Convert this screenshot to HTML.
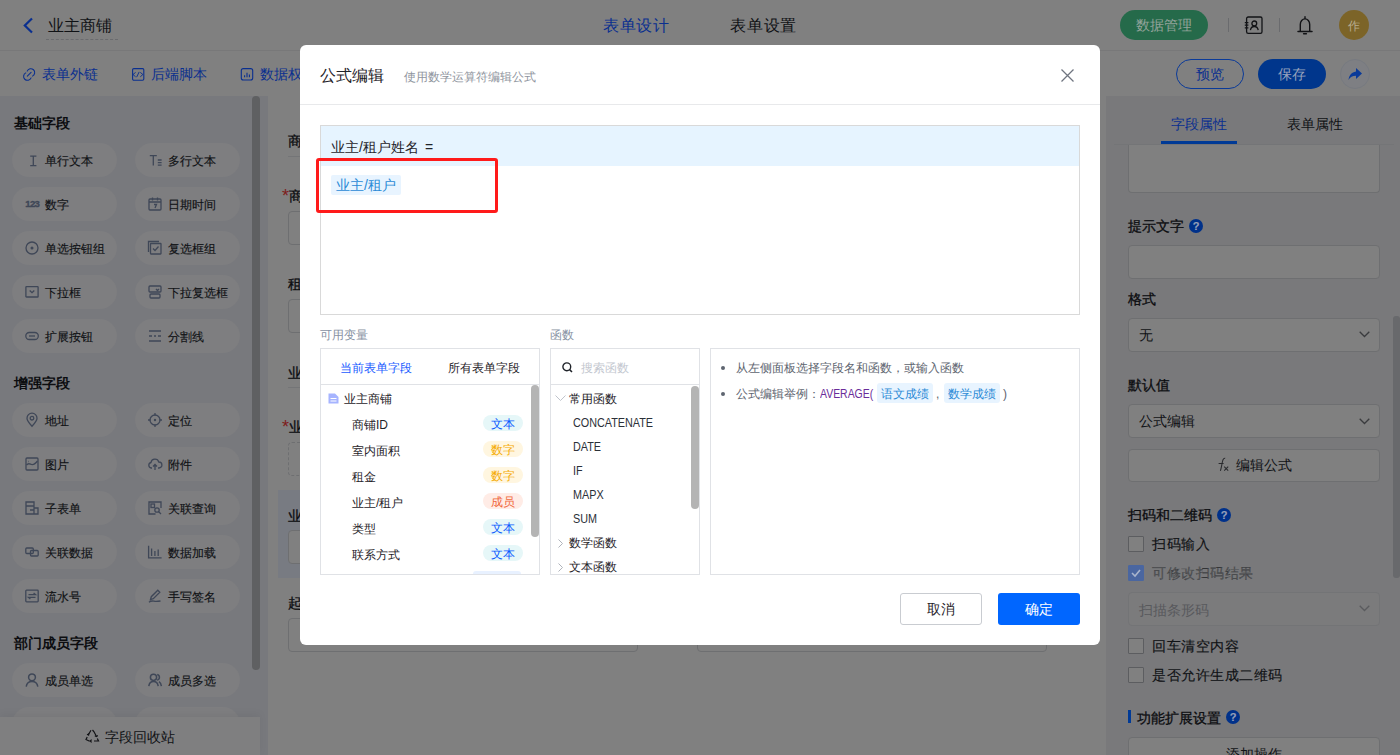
<!DOCTYPE html><html><head><meta charset="utf-8"><style>
*{box-sizing:border-box;margin:0;padding:0}
html,body{width:1400px;height:755px;overflow:hidden;font-family:"Liberation Sans",sans-serif;color:#101215;background:#808080}
.a{position:absolute}
.t{position:absolute;white-space:nowrap;line-height:1}
svg{position:absolute;overflow:visible}
.pill{position:absolute;width:105px;height:34px;border-radius:17px;background:#7e7e80}
.sec{position:absolute;left:14px;font-size:14px;font-weight:bold;line-height:1;color:#0c0d10;white-space:nowrap}
.ptx{position:absolute;font-size:12px;line-height:1;color:#101215;white-space:nowrap}
.inp{position:absolute;border:1px solid #6e6f71;border-radius:4px;background:#808080}
.lbl{position:absolute;font-size:14px;line-height:1;font-weight:500;-webkit-text-stroke:0.3px #0c0d10;color:#0c0d10;white-space:nowrap}
.q{position:absolute;width:14px;height:14px;border-radius:7px;background:#00318a;color:#98a0b8;font-size:11px;font-weight:bold;line-height:14px;text-align:center;-webkit-text-stroke:0.15px #98a0b8}
.cb{position:absolute;left:1128px;width:16px;height:16px;border:1px solid #5c5d60;border-radius:1px;background:#808080}
.cbt{position:absolute;left:1152px;font-size:14px;line-height:1;color:#101215;white-space:nowrap;letter-spacing:0.5px}
#modal{position:absolute;left:300px;top:45px;width:800px;height:600px;background:#fff;border-radius:6px;overflow:hidden;color:#1f2329}
#modal .t{color:#1f2329}
.tag{position:absolute;height:16px;width:40px;border-radius:8px;font-size:12px;line-height:18px;text-align:center;white-space:nowrap}
.fn{position:absolute;font-size:12px;line-height:1;color:#1f2329;white-space:nowrap}
.t,.lbl,.sec,.ptx{margin-top:1px}
.ptx,.cbt,.dk{-webkit-text-stroke:0.15px #101215}
.fn{margin-top:0}
</style></head><body>
<div class="a" style="left:0;top:0;width:1400px;height:51px;background:#808080;border-bottom:1px solid #787879"></div>
<svg style="left:22px;top:17px" width="12" height="17" viewBox="0 0 12 17"><path d="M10 1.5L2.8 8.5L10 15.5" fill="none" stroke="#0a2f8f" stroke-width="2.2"/></svg>
<div class="t" style="left:48px;top:17px;font-size:16px;color:#101215">业主商铺</div>
<div class="a" style="left:46px;top:39px;width:72px;border-top:1px dashed #6a6b6e"></div>
<div class="t" style="left:603px;top:17px;font-size:16px;letter-spacing:0.6px;color:#0a2f8f">表单设计</div>
<div class="t" style="left:730px;top:17px;font-size:16px;letter-spacing:0.8px;color:#101215">表单设置</div>
<div class="a" style="left:1120px;top:10px;width:88px;height:30px;border-radius:15px;background:#256a4a"></div>
<div class="t" style="left:1136px;top:17px;font-size:14px;color:#93a39a">数据管理</div>
<div class="a" style="left:1228px;top:18px;width:1px;height:14px;background:#6a6b6e"></div>
<div class="a" style="left:1279px;top:18px;width:1px;height:14px;background:#6a6b6e"></div>
<svg style="left:1244px;top:16px" width="20" height="19" viewBox="0 0 20 19"><rect x="2.6" y="1" width="15.4" height="16.4" rx="1.6" fill="none" stroke="#121316" stroke-width="1.3"/><path d="M0.8 6.6h3.6M0.8 9.2h3.6M0.8 11.8h3.6" stroke="#121316" stroke-width="1.3"/><circle cx="10.3" cy="7.4" r="2.4" fill="none" stroke="#121316" stroke-width="1.3"/><path d="M6.4 14.2c.4-2.5 1.9-3.7 3.9-3.7s3.5 1.2 3.9 3.7" fill="none" stroke="#121316" stroke-width="1.3"/></svg>
<svg style="left:1297px;top:16px" width="16" height="19" viewBox="0 0 16 19"><path d="M3.3 15.2V8.5a4.7 5.6 0 0 1 9.4 0v6.7" fill="none" stroke="#121316" stroke-width="1.4"/><path d="M1 15.4h14" stroke="#121316" stroke-width="1.5" stroke-linecap="round"/><path d="M6.6 17.8h2.8" stroke="#121316" stroke-width="1.4" stroke-linecap="round"/><path d="M8 0.8v1.6" stroke="#121316" stroke-width="1.4" stroke-linecap="round"/></svg>
<div class="a" style="left:1339px;top:10px;width:30px;height:30px;border-radius:15px;background:#7c6428"></div>
<div class="t" style="left:1348px;top:19px;font-size:12px;color:#b8ad90">作</div>
<svg style="left:22.5px;top:67.5px" width="13" height="13" viewBox="0 0 13 13"><path d="M4.2 3.1A3.9 3.9 0 1 1 9.5 8.1M8.1 9.9A3.9 3.9 0 1 1 2.8 4.9M4.3 8.1L8.1 4.4" fill="none" stroke="#0a2f8f" stroke-width="1.05" stroke-linecap="round"/></svg>
<div class="t" style="left:42px;top:66px;font-size:14px;color:#0a2f8f">表单外链</div>
<svg style="left:132px;top:67.5px" width="13" height="13" viewBox="0 0 13 13"><rect x="0.6" y="0.6" width="11.2" height="11.6" rx="1.2" fill="none" stroke="#0a2f8f" stroke-width="1.1"/><path d="M3.6 4.4L1 6.5l2.6 2.3M8.3 4.4l2.6 2.1-2.6 2.3M7.2 3.9L4.6 9.2" fill="none" stroke="#0a2f8f" stroke-width="0.95"/></svg>
<div class="t" style="left:151px;top:66px;font-size:14px;color:#0a2f8f">后端脚本</div>
<svg style="left:240px;top:68px" width="13" height="13" viewBox="0 0 13 13"><rect x="1.3" y="0.6" width="11.4" height="11.4" rx="2" fill="none" stroke="#0a2f8f" stroke-width="1.1"/><path d="M4.6 9.3V7.2M7 9.3V4.8M9.4 9.3V6.6" stroke="#0a2f8f" stroke-width="1.1"/></svg>
<div class="t" style="left:260px;top:66px;font-size:14px;color:#0a2f8f">数据权限</div>
<div class="a" style="left:1176px;top:59px;width:68px;height:30px;border-radius:15px;border:1px solid #0a3a99"></div>
<div class="t" style="left:1196px;top:66px;font-size:14px;color:#0a2f8f">预览</div>
<div class="a" style="left:1258px;top:59px;width:68px;height:30px;border-radius:15px;background:#00368c"></div>
<div class="t" style="left:1278px;top:66px;font-size:14px;color:#98a2bc">保存</div>
<div class="a" style="left:1340px;top:59px;width:30px;height:30px;border-radius:15px;border:1px solid #777a80;background:#7e7f83"></div>
<svg style="left:1347px;top:66px" width="16" height="16" viewBox="0 0 16 16"><path d="M9 2l6 5.5L9 13V9.8C5.5 9.8 3.2 11 1.5 14 2 9.5 4.5 6.3 9 5.6z" fill="#0a3a99"/></svg>
<div class="a" style="left:0;top:96px;width:268px;height:659px;background:#78797d"></div>
<div class="sec" style="top:115px">基础字段</div>
<div class="pill" style="left:12px;top:143px"></div>
<svg style="left:25px;top:153px" width="14" height="14" viewBox="0 0 14 14"><path d="M5.2 3.2h6.2M8.3 3.2v9.4M5.2 12.6h6.2" fill="none" stroke="#3f4757" stroke-width="1.3"/></svg>
<div class="ptx" style="left:45px;top:154px">单行文本</div>
<div class="pill" style="left:135px;top:143px"></div>
<svg style="left:148px;top:153px" width="14" height="14" viewBox="0 0 14 14"><path d="M1.8 2.6h7M5.3 2.6v10M9.8 7h3.8M9.8 9.6h3.8M9.8 12.2h3.8" fill="none" stroke="#3f4757" stroke-width="1.3"/></svg>
<div class="ptx" style="left:168px;top:154px">多行文本</div>
<div class="pill" style="left:12px;top:187px"></div>
<svg style="left:25px;top:197px" width="14" height="14" viewBox="0 0 14 14"><text x="0.3" y="9.6" font-size="9.6" font-weight="bold" fill="#3f4757" stroke="#3f4757" stroke-width="0.35" style="font-family:Liberation Sans;font-weight:bold" textLength="14.5">123</text></svg>
<div class="ptx" style="left:45px;top:198px">数字</div>
<div class="pill" style="left:135px;top:187px"></div>
<svg style="left:148px;top:197px" width="14" height="14" viewBox="0 0 14 14"><rect x="1" y="2" width="12" height="11" rx="1" fill="none" stroke="#3f4757" stroke-width="1.3"/><path d="M1 5h12M4.5 0.5v3M9.5 0.5v3M6 7.5h2.5L7 11" fill="none" stroke="#3f4757" stroke-width="1.3"/></svg>
<div class="ptx" style="left:168px;top:198px">日期时间</div>
<div class="pill" style="left:12px;top:231px"></div>
<svg style="left:25px;top:241px" width="14" height="14" viewBox="0 0 14 14"><circle cx="7" cy="7" r="6" fill="none" stroke="#3f4757" stroke-width="1.3"/><circle cx="7" cy="7" r="1.5" fill="#3f4757"/></svg>
<div class="ptx" style="left:45px;top:242px">单选按钮组</div>
<div class="pill" style="left:135px;top:231px"></div>
<svg style="left:148px;top:241px" width="14" height="14" viewBox="0 0 14 14"><path d="M0.5 11V0.5H11" fill="none" stroke="#3f4757" stroke-width="1.3"/><rect x="2.5" y="2.5" width="10.5" height="10.5" rx="0.5" fill="none" stroke="#3f4757" stroke-width="1.3"/><path d="M5 7.5l2 2 3.5-4" fill="none" stroke="#3f4757" stroke-width="1.3"/></svg>
<div class="ptx" style="left:168px;top:242px">复选框组</div>
<div class="pill" style="left:12px;top:275px"></div>
<svg style="left:25px;top:285px" width="14" height="14" viewBox="0 0 14 14"><rect x="0.9" y="1.6" width="12.2" height="10.4" rx="0.6" fill="none" stroke="#3f4757" stroke-width="1.3"/><path d="M4.7 5.6L7 7.7l2.3-2.1" fill="none" stroke="#3f4757" stroke-width="1.3"/></svg>
<div class="ptx" style="left:45px;top:286px">下拉框</div>
<div class="pill" style="left:135px;top:275px"></div>
<svg style="left:148px;top:285px" width="14" height="14" viewBox="0 0 14 14"><rect x="1" y="1" width="12" height="6" rx="1" fill="none" stroke="#3f4757" stroke-width="1.3"/><rect x="2" y="9" width="10" height="4" rx="1" fill="none" stroke="#3f4757" stroke-width="1.3"/><path d="M8 4l1.5 1.5L11 4" fill="none" stroke="#3f4757" stroke-width="1.3"/></svg>
<div class="ptx" style="left:168px;top:286px">下拉复选框</div>
<div class="pill" style="left:12px;top:319px"></div>
<svg style="left:25px;top:329px" width="14" height="14" viewBox="0 0 14 14"><rect x="0.8" y="3.5" width="12.5" height="7" rx="3.5" fill="none" stroke="#3f4757" stroke-width="1.3"/><path d="M4 7h6" fill="none" stroke="#3f4757" stroke-width="1.3"/></svg>
<div class="ptx" style="left:45px;top:330px">扩展按钮</div>
<div class="pill" style="left:135px;top:319px"></div>
<svg style="left:148px;top:329px" width="14" height="14" viewBox="0 0 14 14"><path d="M1 2h12M1 7h3M6 7h2M10 7h3M1 12h12" fill="none" stroke="#3f4757" stroke-width="1.3"/></svg>
<div class="ptx" style="left:168px;top:330px">分割线</div>
<div class="sec" style="top:375px">增强字段</div>
<div class="pill" style="left:12px;top:403px"></div>
<svg style="left:25px;top:413px" width="14" height="14" viewBox="0 0 14 14"><path d="M7 13.2C3.5 9.5 2 7.3 2 5.2a5 5 0 0 1 10 0c0 2.1-1.5 4.3-5 8z" fill="none" stroke="#3f4757" stroke-width="1.3"/><circle cx="7" cy="5.2" r="1.8" fill="none" stroke="#3f4757" stroke-width="1.3"/></svg>
<div class="ptx" style="left:45px;top:414px">地址</div>
<div class="pill" style="left:135px;top:403px"></div>
<svg style="left:148px;top:413px" width="14" height="14" viewBox="0 0 14 14"><circle cx="7" cy="7" r="5" fill="none" stroke="#3f4757" stroke-width="1.3"/><circle cx="7" cy="7" r="1.2" fill="#3f4757"/><path d="M7 0v2.5M7 11.5V14M0 7h2.5M11.5 7H14" fill="none" stroke="#3f4757" stroke-width="1.3"/></svg>
<div class="ptx" style="left:168px;top:414px">定位</div>
<div class="pill" style="left:12px;top:447px"></div>
<svg style="left:25px;top:457px" width="14" height="14" viewBox="0 0 14 14"><rect x="1" y="1" width="12" height="12" rx="1" fill="none" stroke="#3f4757" stroke-width="1.3"/><path d="M1.5 8c2-2.5 3.5-1 5-.5s3.5-.5 6-3.5M3.5 4.5h.5" fill="none" stroke="#3f4757" stroke-width="1.3"/></svg>
<div class="ptx" style="left:45px;top:458px">图片</div>
<div class="pill" style="left:135px;top:447px"></div>
<svg style="left:148px;top:457px" width="14" height="14" viewBox="0 0 14 14"><path d="M4 11H3.2A2.8 2.8 0 0 1 3 5.5a4 4 0 0 1 7.8-.5A3 3 0 0 1 11 11h-1M7 13V7.5M5 9.5l2-2 2 2" fill="none" stroke="#3f4757" stroke-width="1.3"/></svg>
<div class="ptx" style="left:168px;top:458px">附件</div>
<div class="pill" style="left:12px;top:491px"></div>
<svg style="left:25px;top:501px" width="14" height="14" viewBox="0 0 14 14"><path d="M1 1h8v12H1zM1 5h8M9 7h4v6H9M5 9h4" fill="none" stroke="#3f4757" stroke-width="1.3"/></svg>
<div class="ptx" style="left:45px;top:502px">子表单</div>
<div class="pill" style="left:135px;top:491px"></div>
<svg style="left:148px;top:501px" width="14" height="14" viewBox="0 0 14 14"><path d="M13 7V1H1v12h6.5" fill="none" stroke="#3f4757" stroke-width="1.3"/><rect x="3" y="3" width="3.5" height="3.5" fill="none" stroke="#3f4757" stroke-width="1.3"/><circle cx="9" cy="9" r="2.2" fill="none" stroke="#3f4757" stroke-width="1.3"/><path d="M10.6 10.6l2.4 2.4" fill="none" stroke="#3f4757" stroke-width="1.3"/></svg>
<div class="ptx" style="left:168px;top:502px">关联查询</div>
<div class="pill" style="left:12px;top:535px"></div>
<svg style="left:25px;top:545px" width="14" height="14" viewBox="0 0 14 14"><rect x="0.8" y="3" width="7.5" height="5.5" rx="1" fill="none" stroke="#3f4757" stroke-width="1.3"/><rect x="5.5" y="5.5" width="7.7" height="5.5" rx="1" fill="none" stroke="#3f4757" stroke-width="1.3"/></svg>
<div class="ptx" style="left:45px;top:546px">关联数据</div>
<div class="pill" style="left:135px;top:535px"></div>
<svg style="left:148px;top:545px" width="14" height="14" viewBox="0 0 14 14"><path d="M0.6 0.8V12.9H13.6M3.6 11V3.5M6.9 11V6M10.2 11V4.5" fill="none" stroke="#3f4757" stroke-width="1.3"/></svg>
<div class="ptx" style="left:168px;top:546px">数据加载</div>
<div class="pill" style="left:12px;top:579px"></div>
<svg style="left:25px;top:589px" width="14" height="14" viewBox="0 0 14 14"><rect x="0.8" y="1.2" width="12.4" height="11.6" rx="0.8" fill="none" stroke="#3f4757" stroke-width="1.3"/><path d="M3.5 5.6h7L8.6 4M10.5 8.4h-7l1.9 1.6" fill="none" stroke="#3f4757" stroke-width="1.3"/></svg>
<div class="ptx" style="left:45px;top:590px">流水号</div>
<div class="pill" style="left:135px;top:579px"></div>
<svg style="left:148px;top:589px" width="14" height="14" viewBox="0 0 14 14"><path d="M2.5 10.5l.8-2.8L9.8 1.2l2 2L5.3 9.7zM1 13.2c1.5-1.3 3-1.5 5-1s3.5.3 6.5-.2" fill="none" stroke="#3f4757" stroke-width="1.3"/></svg>
<div class="ptx" style="left:168px;top:590px">手写签名</div>
<div class="sec" style="top:635px">部门成员字段</div>
<div class="pill" style="left:12px;top:663px"></div>
<svg style="left:25px;top:673px" width="14" height="14" viewBox="0 0 14 14"><circle cx="7" cy="4.3" r="3.4" fill="none" stroke="#3f4757" stroke-width="1.5"/><path d="M1.2 13.6c.5-3.2 2.8-5 5.8-5s5.3 1.8 5.8 5" fill="none" stroke="#3f4757" stroke-width="1.5"/></svg>
<div class="ptx" style="left:45px;top:674px">成员单选</div>
<div class="pill" style="left:135px;top:663px"></div>
<svg style="left:148px;top:673px" width="14" height="14" viewBox="0 0 14 14"><circle cx="5.5" cy="4.3" r="3.1" fill="none" stroke="#3f4757" stroke-width="1.5"/><path d="M0.8 13.2c.4-3 2.3-4.6 4.7-4.6s4.3 1.6 4.7 4.6M9.2 1.4a3 3 0 0 1 0 5.8M11 8.6c1.3.8 2.1 2.3 2.4 4.5" fill="none" stroke="#3f4757" stroke-width="1.5"/></svg>
<div class="ptx" style="left:168px;top:674px">成员多选</div>
<div class="pill" style="left:12px;top:707px"></div><div class="pill" style="left:135px;top:707px"></div>
<div class="a" style="left:252px;top:96px;width:8px;height:574px;border-radius:4px;background:#5f6062"></div>
<div class="a" style="left:0;top:717px;width:260px;height:38px;background:#7f7f80;box-shadow:0 -3px 8px rgba(0,0,0,0.05)"></div>
<svg style="left:85px;top:729px" width="15" height="13" viewBox="0 0 15 13"><path d="M6 1.2L3.3 5.8M2.2 8L1 10.5 4 12h2.5M9 12h4.5l-1.2-2.5M11.5 7.5L9 2.8 7.5 1" fill="none" stroke="#121316" stroke-width="1.2"/><path d="M2 5.2l1.6.9.3-1.9M6.5 10.5l-1 1.5 1 1.5M12.8 6.5l-1.3 1-1.7-.8" fill="none" stroke="#121316" stroke-width="1.1"/></svg>
<div class="t" style="left:105px;top:729px;font-size:14px;color:#101215">字段回收站</div>
<div class="a" style="left:268px;top:96px;width:838px;height:659px;background:#808080"></div>
<div class="lbl" style="left:288px;top:133px">商铺信息</div>
<div class="a" style="left:288px;top:156px;width:759px;height:1px;background:#747577"></div>
<div class="t" style="left:282px;top:186px;font-size:18px;color:#7e1c1c">*</div>
<div class="lbl" style="left:289px;top:188px">商铺名称</div>
<div class="inp" style="left:288px;top:211px;width:350px;height:34px"></div>
<div class="lbl" style="left:288px;top:276px">租金</div>
<div class="inp" style="left:288px;top:299px;width:350px;height:34px"></div>
<div class="lbl" style="left:288px;top:365px">业主信息</div>
<div class="a" style="left:288px;top:387px;width:759px;height:1px;background:#747577"></div>
<div class="t" style="left:282px;top:417px;font-size:18px;color:#7e1c1c">*</div>
<div class="lbl" style="left:289px;top:419px">业主/租户</div>
<div class="inp" style="left:288px;top:442px;width:350px;height:34px;border-style:dashed"></div>
<div class="a" style="left:278px;top:490px;width:818px;height:88px;background:#787b82"></div>
<div class="lbl" style="left:288px;top:508px">业主/租户姓名</div>
<div class="inp" style="left:288px;top:530px;width:350px;height:34px"></div>
<div class="lbl" style="left:288px;top:595px">起租日期</div>
<div class="inp" style="left:288px;top:618px;width:350px;height:34px"></div>
<div class="inp" style="left:697px;top:618px;width:350px;height:34px"></div>
<div class="a" style="left:1106px;top:96px;width:294px;height:659px;background:#79797b"></div>
<div class="t" style="left:1171px;top:116px;font-size:14px;color:#0a2f8f">字段属性</div>
<div class="t" style="left:1287px;top:116px;font-size:14px;color:#101215">表单属性</div>
<div class="a" style="left:1114px;top:144px;width:280px;height:1px;background:#747577"></div>
<div class="a" style="left:1161px;top:141px;width:76px;height:3px;background:#003a96"></div>
<div class="inp" style="left:1128px;top:145px;width:252px;height:48px;border-top:none;border-radius:0 0 4px 4px"></div>
<div class="lbl" style="left:1128px;top:218px">提示文字</div><div class="q" style="left:1189px;top:219px">?</div>
<div class="inp" style="left:1128px;top:245px;width:252px;height:34px"></div>
<div class="lbl" style="left:1128px;top:291px">格式</div>
<div class="inp" style="left:1128px;top:318px;width:252px;height:34px"></div>
<div class="t" style="left:1139px;top:327px;font-size:14px;color:#101215">无</div>
<svg style="left:1359px;top:331px" width="11" height="7" viewBox="0 0 11 7"><path d="M0.7 0.7L5.5 5.5L10.3 0.7" fill="none" stroke="#3a3b3e" stroke-width="1.3"/></svg>
<div class="lbl" style="left:1128px;top:377px">默认值</div>
<div class="inp" style="left:1128px;top:404px;width:252px;height:34px"></div>
<div class="t" style="left:1139px;top:413px;font-size:14px;color:#101215">公式编辑</div>
<svg style="left:1359px;top:418px" width="11" height="7" viewBox="0 0 11 7"><path d="M0.7 0.7L5.5 5.5L10.3 0.7" fill="none" stroke="#3a3b3e" stroke-width="1.3"/></svg>
<div class="inp" style="left:1128px;top:449px;width:252px;height:33px"></div>
<svg style="left:1217px;top:457px" width="14" height="16" viewBox="0 0 14 16"><path d="M3.4 13.8C4.6 10 5.2 4.5 6 2.8 6.6 1.5 7.3 1 8.2 1.3M1.6 6.4H6.6" fill="none" stroke="#2a2b2e" stroke-width="1.05"/><path d="M7.2 9.6l4 4M11.2 9.6l-4 4" stroke="#2a2b2e" stroke-width="1.05"/></svg>
<div class="t" style="left:1236px;top:457px;font-size:14px;color:#101215">编辑公式</div>
<div class="lbl" style="left:1128px;top:507px">扫码和二维码</div><div class="q" style="left:1217px;top:508px">?</div>
<div class="cb" style="top:536px"></div><div class="cbt" style="top:537px">扫码输入</div>
<div class="cb" style="top:565px;background:#4a66a0;border-color:#4a66a0"></div>
<svg style="left:1131px;top:569px" width="10" height="8" viewBox="0 0 10 8"><path d="M1 4l3 3 5-6" fill="none" stroke="#a8b4cc" stroke-width="1.6"/></svg>
<div class="cbt" style="top:566px;color:#58595c">可修改扫码结果</div>
<div class="inp" style="left:1128px;top:592px;width:252px;height:34px;background:#7b7b7c;border-color:#737476"></div>
<div class="t" style="left:1139px;top:602px;font-size:14px;color:#58595c">扫描条形码</div>
<svg style="left:1359px;top:605px" width="11" height="7" viewBox="0 0 11 7"><path d="M0.7 0.7L5.5 5.5L10.3 0.7" fill="none" stroke="#5a5b5e" stroke-width="1.3"/></svg>
<div class="cb" style="top:638px"></div><div class="cbt" style="top:639px">回车清空内容</div>
<div class="cb" style="top:667px"></div><div class="cbt" style="top:668px">是否允许生成二维码</div>
<div class="a" style="left:1128px;top:710px;width:3px;height:13px;background:#003a96"></div>
<div class="lbl" style="left:1137px;top:710px">功能扩展设置</div><div class="q" style="left:1226px;top:710px">?</div>
<div class="inp" style="left:1128px;top:737px;width:252px;height:34px"></div>
<div class="t" style="left:1226px;top:746px;font-size:14px;color:#101215">添加操作</div>
<div class="a" style="left:1393px;top:316px;width:7px;height:262px;border-radius:3px;background:#68696c"></div>
<div id="modal"><div class="t" style="left:20px;top:22px;font-size:16px;color:#1f2329">公式编辑</div><div class="t" style="left:104px;top:25px;font-size:12px;color:#8f959e">使用数学运算符编辑公式</div><svg style="left:761px;top:24px" width="13" height="13" viewBox="0 0 13 13"><path d="M0.5 0.5l12 12M12.5 0.5l-12 12" stroke="#6f7580" stroke-width="1.3"/></svg><div class="a" style="left:0;top:59px;width:800px;height:1px;background:#e8e9eb"></div><div class="a" style="left:20px;top:80px;width:760px;height:190px;border:1px solid #d9d9d9;background:#fff"></div><div class="a" style="left:21px;top:81px;width:758px;height:40px;background:#e6f4ff"></div><div class="t" style="left:31px;top:94px;font-size:14px;color:#1f2329">业主/租户姓名<span style="margin-left:6px">=</span></div><div class="a" style="left:31px;top:130px;width:70px;height:20px;border-radius:2px;background:#e8f4ff"></div><div class="t" style="left:36px;top:132px;font-size:14px;color:#2b8ad6">业主/租户</div><div class="a" style="left:16px;top:113px;width:182px;height:55px;border:3px solid #ff1a1a;border-radius:3px"></div><div class="t" style="left:20px;top:283px;font-size:12px;color:#8791a3">可用变量</div><div class="t" style="left:250px;top:283px;font-size:12px;color:#8791a3">函数</div><div class="a" style="left:20px;top:303px;width:220px;height:227px;border:1px solid #e0e2e6;overflow:hidden"></div><div class="a" style="left:21px;top:339px;width:218px;height:1px;background:#e0e2e6"></div><div class="t" style="left:40px;top:316px;font-size:12px;color:#1a5cff">当前表单字段</div><div class="t" style="left:148px;top:316px;font-size:12px;color:#1f2329">所有表单字段</div><svg style="left:28px;top:348px" width="11" height="11" viewBox="0 0 11 11"><path d="M0.5 0.5h6.5l3.5 3.5v6.5h-10z" fill="#a6b4ff"/><path d="M2.5 5.5h6M2.5 8h6" stroke="#fff" stroke-width="1"/></svg><div class="t" style="left:44px;top:347px;font-size:12px;color:#1f2329">业主商铺</div><div class="t" style="left:52px;top:373px;font-size:12px;color:#1f2329">商铺ID</div><div class="tag" style="left:183px;top:370px;background:#e6f7f8;color:#0b5bff">文本</div><div class="t" style="left:52px;top:399px;font-size:12px;color:#1f2329">室内面积</div><div class="tag" style="left:183px;top:396px;background:#fff6e0;color:#f5aa00">数字</div><div class="t" style="left:52px;top:425px;font-size:12px;color:#1f2329">租金</div><div class="tag" style="left:183px;top:422px;background:#fff6e0;color:#f5aa00">数字</div><div class="t" style="left:52px;top:451px;font-size:12px;color:#1f2329">业主/租户</div><div class="tag" style="left:183px;top:448px;background:#ffece6;color:#f0673a">成员</div><div class="t" style="left:52px;top:477px;font-size:12px;color:#1f2329">类型</div><div class="tag" style="left:183px;top:474px;background:#e6f7f8;color:#0b5bff">文本</div><div class="t" style="left:52px;top:503px;font-size:12px;color:#1f2329">联系方式</div><div class="tag" style="left:183px;top:500px;background:#e6f7f8;color:#0b5bff">文本</div><div class="a" style="left:173px;top:526px;width:48px;height:3px;border-radius:8px 8px 0 0;background:#e8f1ff"></div><div class="a" style="left:231px;top:340px;width:8px;height:152px;border-radius:4px;background:#b4b4b4"></div><div class="a" style="left:250px;top:303px;width:150px;height:227px;border:1px solid #e0e2e6"></div><div class="a" style="left:251px;top:339px;width:148px;height:1px;background:#e0e2e6"></div><svg style="left:262px;top:317px" width="11" height="11" viewBox="0 0 11 11"><circle cx="4.8" cy="4.8" r="3.9" fill="none" stroke="#1f2329" stroke-width="1.4"/><path d="M7.6 7.6l2.4 2.4" stroke="#1f2329" stroke-width="1.5"/></svg><div class="t" style="left:281px;top:316px;font-size:12px;color:#c3c7cf">搜索函数</div><svg style="left:255px;top:350px" width="11" height="7" viewBox="0 0 11 7"><path d="M0.5 0.5L5.5 5.5L10.5 0.5" fill="none" stroke="#c0c4cc" stroke-width="1"/></svg><div class="t" style="left:269px;top:347px;font-size:12px;color:#1f2329">常用函数</div><div class="fn" style="left:273px;top:372px;transform:scaleX(0.9);transform-origin:0 0;color:#2b3038">CONCATENATE</div><div class="fn" style="left:273px;top:396px;transform:scaleX(0.9);transform-origin:0 0;color:#2b3038">DATE</div><div class="fn" style="left:273px;top:420px;transform:scaleX(0.9);transform-origin:0 0;color:#2b3038">IF</div><div class="fn" style="left:273px;top:444px;transform:scaleX(0.9);transform-origin:0 0;color:#2b3038">MAPX</div><div class="fn" style="left:273px;top:468px;transform:scaleX(0.9);transform-origin:0 0;color:#2b3038">SUM</div><svg style="left:258px;top:494px" width="5" height="9" viewBox="0 0 5 9"><path d="M0.5 0.5l4 4-4 4" fill="none" stroke="#b0b4bc" stroke-width="1"/></svg><div class="t" style="left:269px;top:491px;font-size:12px;color:#1f2329">数学函数</div><svg style="left:258px;top:518px" width="5" height="9" viewBox="0 0 5 9"><path d="M0.5 0.5l4 4-4 4" fill="none" stroke="#b0b4bc" stroke-width="1"/></svg><div class="t" style="left:269px;top:515px;font-size:12px;color:#1f2329">文本函数</div><div class="a" style="left:251px;top:529px;width:148px;height:30px;background:#fff"></div><div class="a" style="left:250px;top:529px;width:150px;height:1px;background:#e0e2e6"></div><div class="a" style="left:391px;top:341px;width:8px;height:123px;border-radius:4px;background:#b4b4b4"></div><div class="a" style="left:410px;top:303px;width:370px;height:227px;border:1px solid #e0e2e6"></div><div class="a" style="left:421px;top:321px;width:4px;height:4px;border-radius:2px;background:#5e6570"></div><div class="t" style="left:436px;top:316px;font-size:12px;color:#5e6570">从左侧面板选择字段名和函数，或输入函数</div><div class="a" style="left:421px;top:347px;width:4px;height:4px;border-radius:2px;background:#5e6570"></div><div class="t" style="left:436px;top:342px;font-size:12px;color:#5e6570">公式编辑举例：</div><div class="t" style="left:520px;top:342px;font-size:12px;color:#6a2c9a;transform:scaleX(0.87);transform-origin:0 0">AVERAGE(</div><div class="a" style="left:577px;top:338px;width:56px;height:20px;border-radius:3px;background:#e8f4ff"></div><div class="t" style="left:581px;top:342px;font-size:12px;color:#2b8ad6">语文成绩</div><div class="t" style="left:636px;top:342px;font-size:12px;color:#5e6570">,</div><div class="a" style="left:644px;top:338px;width:56px;height:20px;border-radius:3px;background:#e8f4ff"></div><div class="t" style="left:648px;top:342px;font-size:12px;color:#2b8ad6">数学成绩</div><div class="t" style="left:703px;top:342px;font-size:12px;color:#5e6570">)</div><div class="a" style="left:600px;top:548px;width:82px;height:32px;border:1px solid #c9ccd1;border-radius:3px"></div><div class="t" style="left:627px;top:556px;font-size:14px;color:#1f2329">取消</div><div class="a" style="left:698px;top:548px;width:82px;height:32px;border-radius:3px;background:#0066ff"></div><div class="t" style="left:725px;top:556px;font-size:14px;color:#fff">确定</div></div>
</body></html>
